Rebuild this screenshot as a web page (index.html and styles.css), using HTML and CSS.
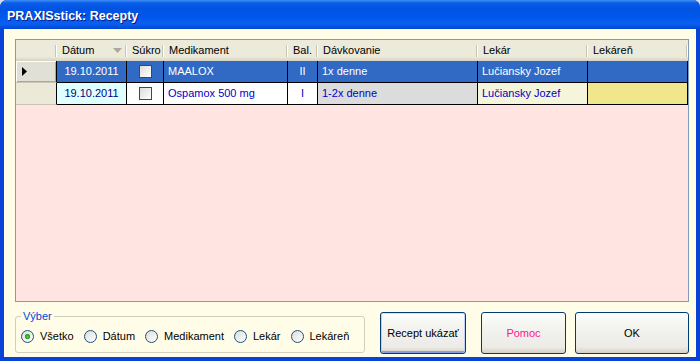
FILE: index.html
```html
<!DOCTYPE html>
<html lang="sk">
  <head>
    <meta charset="utf-8">
    <title>PRAXISstick: Recepty</title>
    <link rel="stylesheet" href="styles.css">
  </head>
  <body>
    <div class="window">
      <div class="titlebar">PRAXISstick: Recepty</div>
      <div class="client">
        <div class="grid">
          <div class="row head">
            <div class="c c-rh"></div>
            <div class="c c-date">
              <span>Dátum</span>
              <svg class="sort" width="9" height="5" viewBox="0 0 9 5"><path d="M0 0h9L4.5 5z" fill="#aca899"/></svg>
            </div>
            <div class="c c-chk">Súkro</div>
            <div class="c c-med">Medikament</div>
            <div class="c c-bal">Bal.</div>
            <div class="c c-dav">Dávkovanie</div>
            <div class="c c-lek">Lekár</div>
            <div class="c c-lkr">Lekáreň</div>
          </div>
          <div class="row data sel">
            <div class="c c-rh">
              <svg width="5" height="9" viewBox="0 0 5 9"><path d="M0 0l5 4.5L0 9z" fill="#000"/></svg>
            </div>
            <div class="c c-date">19.10.2011</div>
            <div class="c c-chk"><span class="chk"></span></div>
            <div class="c c-med">MAALOX</div>
            <div class="c c-bal">II</div>
            <div class="c c-dav">1x denne</div>
            <div class="c c-lek">Lučiansky Jozef</div>
            <div class="c c-lkr"></div>
          </div>
          <div class="row data">
            <div class="c c-rh"></div>
            <div class="c c-date">19.10.2011</div>
            <div class="c c-chk"><span class="chk"></span></div>
            <div class="c c-med">Ospamox 500 mg</div>
            <div class="c c-bal">I</div>
            <div class="c c-dav">1-2x denne</div>
            <div class="c c-lek">Lučiansky Jozef</div>
            <div class="c c-lkr"></div>
          </div>
        </div>

        <div class="bottom">
          <fieldset class="choice">
            <legend>Výber</legend>
            <div class="radios">
              <label><span class="radio on"></span>Všetko</label>
              <label><span class="radio"></span>Dátum</label>
              <label><span class="radio"></span>Medikament</label>
              <label><span class="radio"></span>Lekár</label>
              <label><span class="radio"></span>Lekáreň</label>
            </div>
          </fieldset>
          <button class="btn btn-show">Recept ukázať</button>
          <button class="btn btn-help">Pomoc</button>
          <button class="btn btn-ok">OK</button>
        </div>
      </div>
    </div>
  </body>
</html>
```

FILE: styles.css
```css
body {
  margin: 0;
  background: #d4def2;
  font-family: "Liberation Sans", Arial, sans-serif;
  font-size: 11px;
}
.window {
  width: 700px;
  height: 361px;
  display: flex;
  flex-direction: column;
  background: #0842d8;
  border-radius: 7px 7px 0 0;
  overflow: hidden;
}
.titlebar {
  flex: none;
  height: 25px;
  padding: 4px 0 0 7px;
  line-height: 25px;
  color: #fff;
  font-size: 12.5px;
  font-weight: bold;
  text-shadow: 1px 1px #0a1883;
  background: linear-gradient(#3d8ff7 0px, #0b5de8 3px, #0054e3 9px, #0058ee 18px, #0a60f0 24px, #0046d0 29px);
}
.client {
  flex: 1;
  margin: 0 4px 4px;
  padding: 10px 7px 0 11px;
  background: #fffde8;
  display: flex;
  flex-direction: column;
}

/* grid */
.grid {
  height: 263px;
  box-sizing: border-box;
  border: 1px solid #7f9db9;
  background: #ffe4e1;
}
.row {
  display: flex;
  height: 22px;
}
.c {
  box-sizing: border-box;
  padding: 0 4px;
  line-height: 21px;
  white-space: nowrap;
  overflow: hidden;
  border-right: 1px solid #000;
  border-bottom: 1px solid #000;
}
.c-rh { width: 41px; }
.c-date { width: 70px; text-align: center; }
.c-chk { width: 37px; }
.c-med { width: 124px; }
.c-bal { width: 30px; text-align: center; }
.c-dav { width: 160px; }
.c-lek { width: 110px; }
.c-lkr { width: 100px; }

.head {
  height: 21px;
}
.head .c {
  border: 0;
  padding-left: 5px;
  color: #000;
  text-align: left;
  background:
    linear-gradient(#c7c5b2, #c7c5b2) right 1px center / 1px 12px no-repeat,
    linear-gradient(#fff, #fff) right 0 center / 1px 12px no-repeat,
    linear-gradient(#ebeadb 80%, #e2decd 90%, #d6d2c2);
}
.head .c-date {
  display: flex;
  align-items: center;
  justify-content: space-between;
  padding-right: 5px;
}

.data .c-rh {
  display: flex;
  align-items: center;
  padding-left: 6px;
  background: #ece9d8;
  border-bottom-color: #c9c6b4;
}
.data.sel .c-rh {
  background: #e1e0d6;
  box-shadow: inset 1px 1px #fff, inset -1px -1px #aca899;
}
.data .c-chk {
  display: flex;
  align-items: center;
  justify-content: center;
}
.chk {
  width: 13px;
  height: 13px;
  box-sizing: border-box;
  border: 1px solid #1c5180;
  background: linear-gradient(135deg, #dcdcd7, #fff);
}

.sel .c {
  color: #fff;
}
.sel .c-date, .sel .c-chk, .sel .c-med, .sel .c-bal,
.sel .c-dav, .sel .c-lek, .sel .c-lkr {
  background: #316ac5;
}
.data:not(.sel) .c { color: #0000c8; }
.data:not(.sel) .c-date { background: #e0ffff; color: #000080; }
.data:not(.sel) .c-chk,
.data:not(.sel) .c-med,
.data:not(.sel) .c-bal { background: #fff; }
.data:not(.sel) .c-dav { background: #dcdcdc; }
.data:not(.sel) .c-lek { background: #f5f5dc; }
.data:not(.sel) .c-lkr { background: #f0e68c; }

/* bottom */
.bottom {
  display: flex;
  align-items: flex-start;
  margin-top: 8px;
}
.choice {
  width: 350px;
  height: 43px;
  box-sizing: border-box;
  margin: 0;
  padding: 0 0 0 5px;
  border: 1px solid #d0d0bf;
  border-radius: 3px;
}
.choice legend {
  padding: 0 2px;
  line-height: 12px;
  color: #0046d5;
}
.radios {
  display: flex;
  gap: 10px;
  padding-top: 8px;
  line-height: 13px;
}
.radios label {
  display: flex;
  align-items: center;
  gap: 6px;
}
.radio {
  width: 13px;
  height: 13px;
  box-sizing: border-box;
  border: 1px solid #1c5180;
  border-radius: 50%;
  background: linear-gradient(135deg, #dcdcd7, #fff);
}
.radio.on {
  background:
    radial-gradient(circle, #5fd35a 0, #21a121 2.2px, transparent 3px),
    linear-gradient(135deg, #dcdcd7, #fff);
}

.btn {
  height: 42px;
  margin-top: 2px;
  padding: 0;
  box-sizing: border-box;
  border: 1px solid #003c74;
  border-radius: 3px;
  background: linear-gradient(#fff, #f4f4f0 30%, #ecebe6 85%, #d6d0c5);
  font-family: inherit;
  font-size: 11px;
  color: #000;
}
.btn-show {
  width: 86px;
  margin-left: 15px;
  box-shadow: inset 0 1px #cee7ff, inset 1px 0 #b8d3f7, inset -1px 0 #b8d3f7, inset 0 -2px #7ea0e6;
}
.btn-help {
  width: 85px;
  margin-left: 15px;
  color: #ff1493;
}
.btn-ok {
  width: 114px;
  margin-left: 9px;
}
```
